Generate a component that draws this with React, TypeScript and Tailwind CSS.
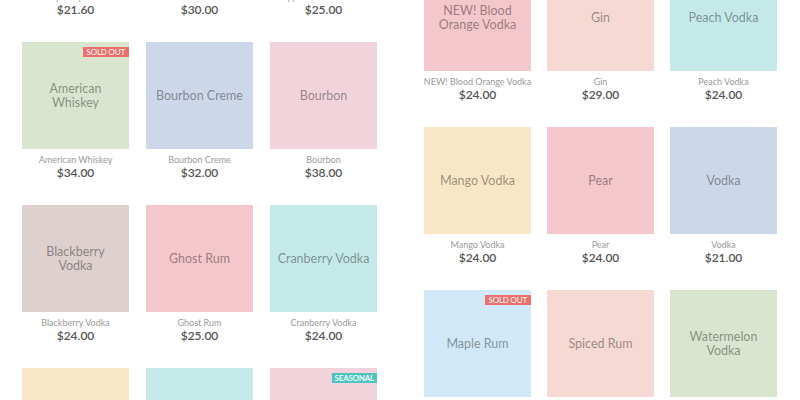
import React from "react";

interface Product {
  name: string;
  label?: string;
  price: string;
  color: string;
  badge?: "sold" | "seasonal";
}

const leftProducts: Product[] = [
  { name: "Raspberry Vodka", price: "$21.60", color: "bg-[#f4c7cc]" },
  { name: "Salted Caramel Vodka", price: "$30.00", color: "bg-[#f8e6c7]" },
  { name: "Apple Pie Moonshine", price: "$25.00", color: "bg-[#d9e5cf]" },
  { name: "American Whiskey", label: "American\nWhiskey", price: "$34.00", color: "bg-[#d9e5cf]", badge: "sold" },
  { name: "Bourbon Creme", price: "$32.00", color: "bg-[#cdd7ea]" },
  { name: "Bourbon", price: "$38.00", color: "bg-[#f2d3dc]" },
  { name: "Blackberry Vodka", label: "Blackberry\nVodka", price: "$24.00", color: "bg-[#ddd0ce]" },
  { name: "Ghost Rum", price: "$25.00", color: "bg-[#f4c7cc]" },
  { name: "Cranberry Vodka", price: "$24.00", color: "bg-[#c5e9e8]" },
  { name: "Honey Whiskey", price: "$28.00", color: "bg-[#f8e6c7]" },
  { name: "Lime Vodka", price: "$24.00", color: "bg-[#c5e9e8]" },
  { name: "Pumpkin Spice", price: "$26.00", color: "bg-[#f2d3dc]", badge: "seasonal" },
];

const rightProducts: Product[] = [
  { name: "NEW! Blood Orange Vodka", label: "NEW! Blood\nOrange Vodka", price: "$24.00", color: "bg-[#f4c7cc]" },
  { name: "Gin", price: "$29.00", color: "bg-[#f6d9d3]" },
  { name: "Peach Vodka", price: "$24.00", color: "bg-[#c5e9e8]" },
  { name: "Mango Vodka", price: "$24.00", color: "bg-[#f8e6c7]" },
  { name: "Pear", price: "$24.00", color: "bg-[#f4c7cc]" },
  { name: "Vodka", price: "$21.00", color: "bg-[#cdd7ea]" },
  { name: "Maple Rum", price: "$24.00", color: "bg-[#d0e8f7]", badge: "sold" },
  { name: "Spiced Rum", price: "$24.00", color: "bg-[#f6d9d3]" },
  { name: "Watermelon Vodka", label: "Watermelon\nVodka", price: "$24.00", color: "bg-[#d9e5cf]" },
];

const ProductTile = ({ product }: { product: Product }) => {
  return (
    <div className="flex flex-col items-center">
      <div
        className={`relative w-[107px] h-[107px] ${product.color} flex items-center justify-center`}
      >
        {product.badge === "sold" && (
          <span className="absolute top-[5px] right-0 bg-[#ec6f6c] text-white text-[8px] leading-[10px] px-[4px] tracking-tight">
            SOLD OUT
          </span>
        )}
        {product.badge === "seasonal" && (
          <span className="absolute top-[5px] right-0 bg-[#4cc4c0] text-white text-[8px] leading-[10px] px-[3px] font-semibold tracking-tight">
            SEASONAL
          </span>
        )}
        <span className="text-center whitespace-pre text-[12.5px] leading-[14px] text-black/40">
          {product.label ?? product.name}
        </span>
      </div>
      <span className="mt-[5px] whitespace-nowrap text-[9px] leading-[11px] text-[#9a9a9a]">
        {product.name}
      </span>
      <span className="text-[12px] leading-[16px] font-semibold text-[#555]">
        {product.price}
      </span>
    </div>
  );
};

export default function App() {
  return (
    <div
      className="flex w-[800px] h-[400px] overflow-hidden bg-white"
      style={{ fontFamily: "Lato, 'Open Sans', sans-serif" }}
    >
      <div className="w-[400px] shrink-0 pl-[22px]">
        <div className="mt-[-121px] grid grid-cols-[107px_107px_107px] gap-x-[17px] gap-y-[24px]">
          {leftProducts.map((p) => (
            <ProductTile key={p.name} product={p} />
          ))}
        </div>
      </div>
      <div className="w-[400px] shrink-0 pl-[24px]">
        <div className="mt-[-36px] grid grid-cols-[107px_107px_107px] gap-x-[16px] gap-y-[24px]">
          {rightProducts.map((p) => (
            <ProductTile key={p.name} product={p} />
          ))}
        </div>
      </div>
    </div>
  );
}
